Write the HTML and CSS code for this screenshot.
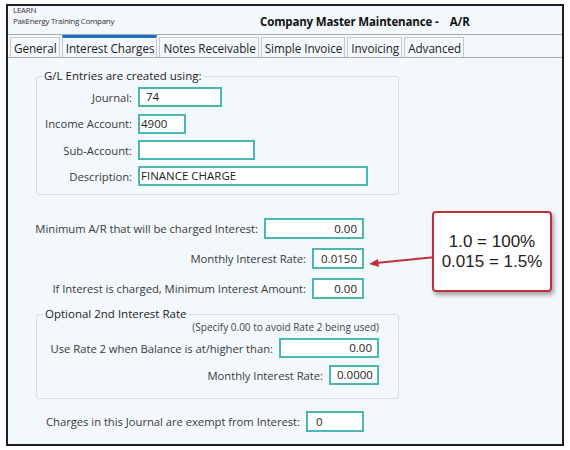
FILE: index.html
```html
<!DOCTYPE html>
<html>
<head>
<meta charset="utf-8">
<link rel="stylesheet" href="styles.css">
</head>
<body>
<div class="window">
  <div class="header">
    <div class="org">
      <div class="org-line">LEARN</div>
      <div class="org-line">PakEnergy Training Company</div>
    </div>
    <div class="title">Company Master Maintenance -&nbsp;&nbsp;&nbsp; A/R</div>
  </div>
  <div class="tabs">
    <div class="tab">General</div>
    <div class="tab active">Interest Charges</div>
    <div class="tab">Notes Receivable</div>
    <div class="tab">Simple Invoice</div>
    <div class="tab">Invoicing</div>
    <div class="tab">Advanced</div>
  </div>
  <div class="content">
    <fieldset class="group gl">
      <legend>G/L Entries are created using:</legend>
      <div class="form-grid">
        <label>Journal:</label><div class="input w83">74</div>
        <label>Income Account:</label><div class="input w47 tight">4900</div>
        <label>Sub-Account:</label><div class="input w116"></div>
        <label>Description:</label><div class="input w229 tight">FINANCE CHARGE</div>
      </div>
    </fieldset>

    <div class="rows">
      <div class="row"><label>Minimum A/R that will be charged Interest:</label><div class="input w99 num">0.00</div></div>
      <div class="row"><label>Monthly Interest Rate:</label><div class="input w51 num">0.0150</div></div>
      <div class="row"><label>If Interest is charged, Minimum Interest Amount:</label><div class="input w51 num">0.00</div></div>
    </div>

    <fieldset class="group opt">
      <legend>Optional 2nd Interest Rate</legend>
      <div class="note">(Specify 0.00 to avoid Rate 2 being used)</div>
      <div class="row r1"><label>Use Rate 2 when Balance is at/higher than:</label><div class="input w99 num">0.00</div></div>
      <div class="row r2"><label>Monthly Interest Rate:</label><div class="input w49 num">0.0000</div></div>
    </fieldset>

    <div class="rows last">
      <div class="row"><label>Charges in this Journal are exempt from Interest:</label><div class="input w57 pad">0</div></div>
    </div>
  </div>

  <svg class="arrow" width="80" height="20" viewBox="0 0 80 20">
    <line x1="78" y1="5" x2="8" y2="12" stroke="#c0313a" stroke-width="2"/>
    <polygon points="1,13 10,8 11,16" fill="#c0313a"/>
  </svg>
  <div class="callout">
    <div>1.0 = 100%</div>
    <div>0.015 = 1.5%</div>
  </div>
</div>
</body>
</html>
```
FILE: styles.css
```css
* { box-sizing: border-box; }
body {
  margin: 0;
  background: #ffffff;
  font-family: "Open Sans", "Noto Sans", sans-serif;
}
.window {
  position: relative;
  margin: 4px 0 0 6px;
  width: 558px;
  height: 442px;
  border: 2px solid #1e1e24;
  background: #f3f8fd;
  display: flex;
  flex-direction: column;
}
.header {
  height: 29px;
  display: flex;
  align-items: flex-start;
  border-bottom: 1px solid #a8aaad;
  padding-left: 5px;
}
.org {
  font-size: 8px;
  color: #333;
  line-height: 11px;
  margin-top: -2px;
  width: 247px;
  letter-spacing: -0.3px;
}
.title {
  font-family: "Open Sans", sans-serif;
  font-weight: 700;
  font-size: 11.5px;
  color: #111;
  padding-top: 8px;
  white-space: pre;
  letter-spacing: -0.15px;
}
.tabs {
  height: 23px;
  display: flex;
  gap: 2px;
  padding-left: 2px;
  padding-top: 2px;
  border-bottom: 1px solid #a8aaad;
}
.tab {
  font-size: 11.7px;
  color: #222;
  border: 1px solid #c4c7cb;
  border-bottom: none;
  padding: 1px 2px 0 3px;
  line-height: 18px;
  background: #f3f8fd;
  letter-spacing: -0.05px;
}
.tab.active {
  border-top: 3px solid #1b6fc4;
  margin-top: -2px;
  line-height: 19px;
}
.content {
  padding-left: 28px;
  flex: 1;
}
label {
  font-size: 11.3px;
  color: #3a3a3a;
  white-space: nowrap;
  letter-spacing: -0.05px;
}
.group {
  margin: 0;
  border: 1px solid #d9dde1;
  border-radius: 3px;
  width: 363px;
  padding: 0;
}
.group legend {
  font-size: 11.5px;
  color: #222;
  padding: 0 2px;
  margin-left: 5px;
  line-height: 14px;
}
.gl {
  margin-top: 11px;
  padding: 4px 0 8px 0;
}
.form-grid {
  display: grid;
  grid-template-columns: 95px auto;
  column-gap: 6px;
  row-gap: 6px;
  align-items: center;
  justify-items: start;
}
.form-grid label { justify-self: end; }
.input {
  flex-shrink: 0;
  height: 20px;
  border: 2px solid #4bb7b1;
  background: #fff;
  font-size: 11.5px;
  color: #222;
  line-height: 16px;
  padding: 0 6px;
  white-space: nowrap;
}
.form-grid .input:nth-of-type(2) { margin-top: 1px; }
.input.tight { padding-left: 1px; }
.input.num { text-align: right; padding-right: 5px; }
.w83 { width: 84px; }
.w47 { width: 48px; }
.w116 { width: 117px; }
.w229 { width: 230px; }
.w99 { width: 100px; }
.w51 { width: 52px; }
.w49 { width: 50px; }
.w57 { width: 58px; }
.rows {
  width: 328px;
  margin-top: 23px;
  display: flex;
  flex-direction: column;
  gap: 9px;
}
.rows .input { height: 21px; line-height: 17px; }
.row {
  display: flex;
  justify-content: flex-end;
  align-items: center;
  gap: 6px;
}
.opt {
  margin-top: 8px;
  padding: 0 19px 13px 0;
}
.opt legend { margin-left: 6px; }
.note {
  font-size: 10px;
  color: #444;
  text-align: right;
  margin-top: 0px;
  line-height: 12px;
}
.opt .r1 { margin-top: 5px; }
.opt .r2 { margin-top: 7px; }
.rows.last { margin-top: 12px; }
.input.pad { padding-left: 8px; }
.arrow {
  position: absolute;
  left: 360px;
  top: 245px;
}
.callout {
  position: absolute;
  left: 424px;
  top: 205px;
  width: 120px;
  height: 81px;
  background: #fff;
  border: 2px solid #c0313a;
  border-radius: 4px;
  box-shadow: 2px 3px 4px rgba(0,0,0,0.35);
  font-family: "Liberation Sans", Arial, sans-serif;
  font-size: 17px;
  color: #222;
  display: flex;
  flex-direction: column;
  align-items: center;
  justify-content: center;
  line-height: 20px;
}
```
